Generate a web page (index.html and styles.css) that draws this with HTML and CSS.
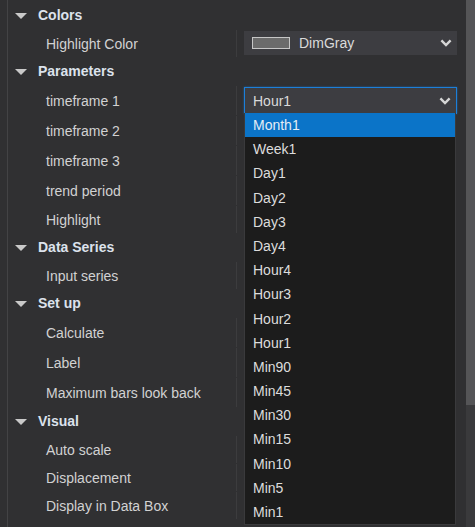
FILE: index.html
```html
<!DOCTYPE html>
<html lang="en">
<head>
    <meta charset="UTF-8">
    <meta name="viewport" content="width=device-width, initial-scale=1.0">
    <title>Properties</title>
    <link rel="stylesheet" href="styles.css">
</head>
<body>
    <div class="window">
        <div class="panel">
            <div class="group">
                <div class="group-head"><span class="arrow"></span>Colors</div>
                <div class="row">
                    <div class="name">Highlight Color</div>
                    <div class="value">
                        <div class="select">
                            <span class="swatch"></span>
                            <span class="select-text">DimGray</span>
                            <svg class="chevron" width="12" height="8" viewBox="0 0 12 8"><path d="M1.4 1.4 L6 6 L10.6 1.4" fill="none" stroke="#d6d6d6" stroke-width="2.4"/></svg>
                        </div>
                    </div>
                </div>
            </div>

            <div class="group">
                <div class="group-head"><span class="arrow"></span>Parameters</div>
                <div class="row tall">
                    <div class="name">timeframe 1</div>
                    <div class="value">
                        <div class="select focused">
                            <span class="select-text">Hour1</span>
                            <svg class="chevron" width="12" height="8" viewBox="0 0 12 8"><path d="M1.4 1.4 L6 6 L10.6 1.4" fill="none" stroke="#d6d6d6" stroke-width="2.4"/></svg>
                        </div>
                    </div>
                </div>
                <div class="row tall"><div class="name">timeframe 2</div><div class="value"></div></div>
                <div class="row tall"><div class="name">timeframe 3</div><div class="value"></div></div>
                <div class="row tall"><div class="name">trend period</div><div class="value"></div></div>
                <div class="row"><div class="name">Highlight</div><div class="value"></div></div>
            </div>

            <div class="group">
                <div class="group-head"><span class="arrow"></span>Data Series</div>
                <div class="row"><div class="name">Input series</div><div class="value"></div></div>
            </div>

            <div class="group">
                <div class="group-head"><span class="arrow"></span>Set up</div>
                <div class="row tall"><div class="name">Calculate</div><div class="value"></div></div>
                <div class="row tall"><div class="name">Label</div><div class="value"></div></div>
                <div class="row tall"><div class="name">Maximum bars look back</div><div class="value"></div></div>
            </div>

            <div class="group">
                <div class="group-head"><span class="arrow"></span>Visual</div>
                <div class="row"><div class="name">Auto scale</div><div class="value"></div></div>
                <div class="row"><div class="name">Displacement</div><div class="value"></div></div>
                <div class="row"><div class="name">Display in Data Box</div><div class="value"></div></div>
            </div>
        </div>

        <div class="scrollbar"><div class="thumb"></div></div>

        <ul class="dropdown">
            <li class="selected">Month1</li>
            <li>Week1</li>
            <li>Day1</li>
            <li>Day2</li>
            <li>Day3</li>
            <li>Day4</li>
            <li>Hour4</li>
            <li>Hour3</li>
            <li>Hour2</li>
            <li>Hour1</li>
            <li>Min90</li>
            <li>Min45</li>
            <li>Min30</li>
            <li>Min15</li>
            <li>Min10</li>
            <li>Min5</li>
            <li>Min1</li>
        </ul>
    </div>
</body>
</html>
```

FILE: styles.css
```css
body {
    margin: 0;
    padding: 0;
    background-color: #303032;
    font-family: 'Liberation Sans', Arial, sans-serif;
    font-size: 14px;
    color: #d2d2d2;
}

.window {
    position: relative;
    display: flex;
    height: 527px;
    overflow: hidden;
}

.panel {
    flex: 1;
    margin-left: 7px;
    border-left: 1px solid #434345;
    padding-top: 1px;
}

.group-head {
    display: flex;
    align-items: center;
    height: 28px;
    padding-left: 7px;
    font-weight: bold;
    color: #dce2ec;
}

.arrow {
    width: 0;
    height: 0;
    border-left: 6px solid transparent;
    border-right: 6px solid transparent;
    border-top: 6px solid #c9c9c9;
    margin-right: 11px;
    margin-top: 1px;
}

.row {
    display: flex;
    height: 28px;
}

.row.tall {
    height: 30px;
}

.name {
    width: 190px;
    padding-left: 38px;
    display: flex;
    align-items: center;
    border-right: 1px solid #3c3c3e;
    margin-top: 1px;
}

.value {
    flex: 1;
    display: flex;
    align-items: center;
    padding-left: 7px;
    padding-right: 9px;
}

.select {
    display: flex;
    align-items: center;
    width: 213px;
    height: 24px;
    box-sizing: border-box;
    background-color: #3d3d41;
    padding: 0 5px 0 8px;
}

.select.focused {
    height: 27px;
    border: 1px solid #1c7fd9;
    box-shadow: 0 0 2px rgba(28, 127, 217, 0.6);
    padding-left: 8px;
    margin-top: 1px;
}

.swatch {
    width: 38px;
    height: 12px;
    box-sizing: border-box;
    border: 1px solid #c6c6c6;
    background-color: #6b6b6b;
    margin-right: 9px;
}

.select-text {
    flex: 1;
    color: #dadada;
}

.chevron {
    display: block;
}

.scrollbar {
    width: 9px;
    background-color: #3a3a3c;
}

.thumb {
    height: 405px;
    background-color: #555557;
}

.dropdown {
    position: absolute;
    top: 113px;
    left: 244px;
    width: 212px;
    height: 412px;
    box-sizing: border-box;
    margin: 0;
    padding: 0;
    list-style: none;
    background-color: #1c1c1c;
    border: 1px solid #3a3a3c;
    border-top: none;
}

.dropdown li {
    height: 24.2px;
    line-height: 24px;
    padding-left: 8px;
    color: #dcdcdc;
}

.dropdown li.selected {
    background-color: #0b74c8;
    color: #e4ecf5;
}
```
